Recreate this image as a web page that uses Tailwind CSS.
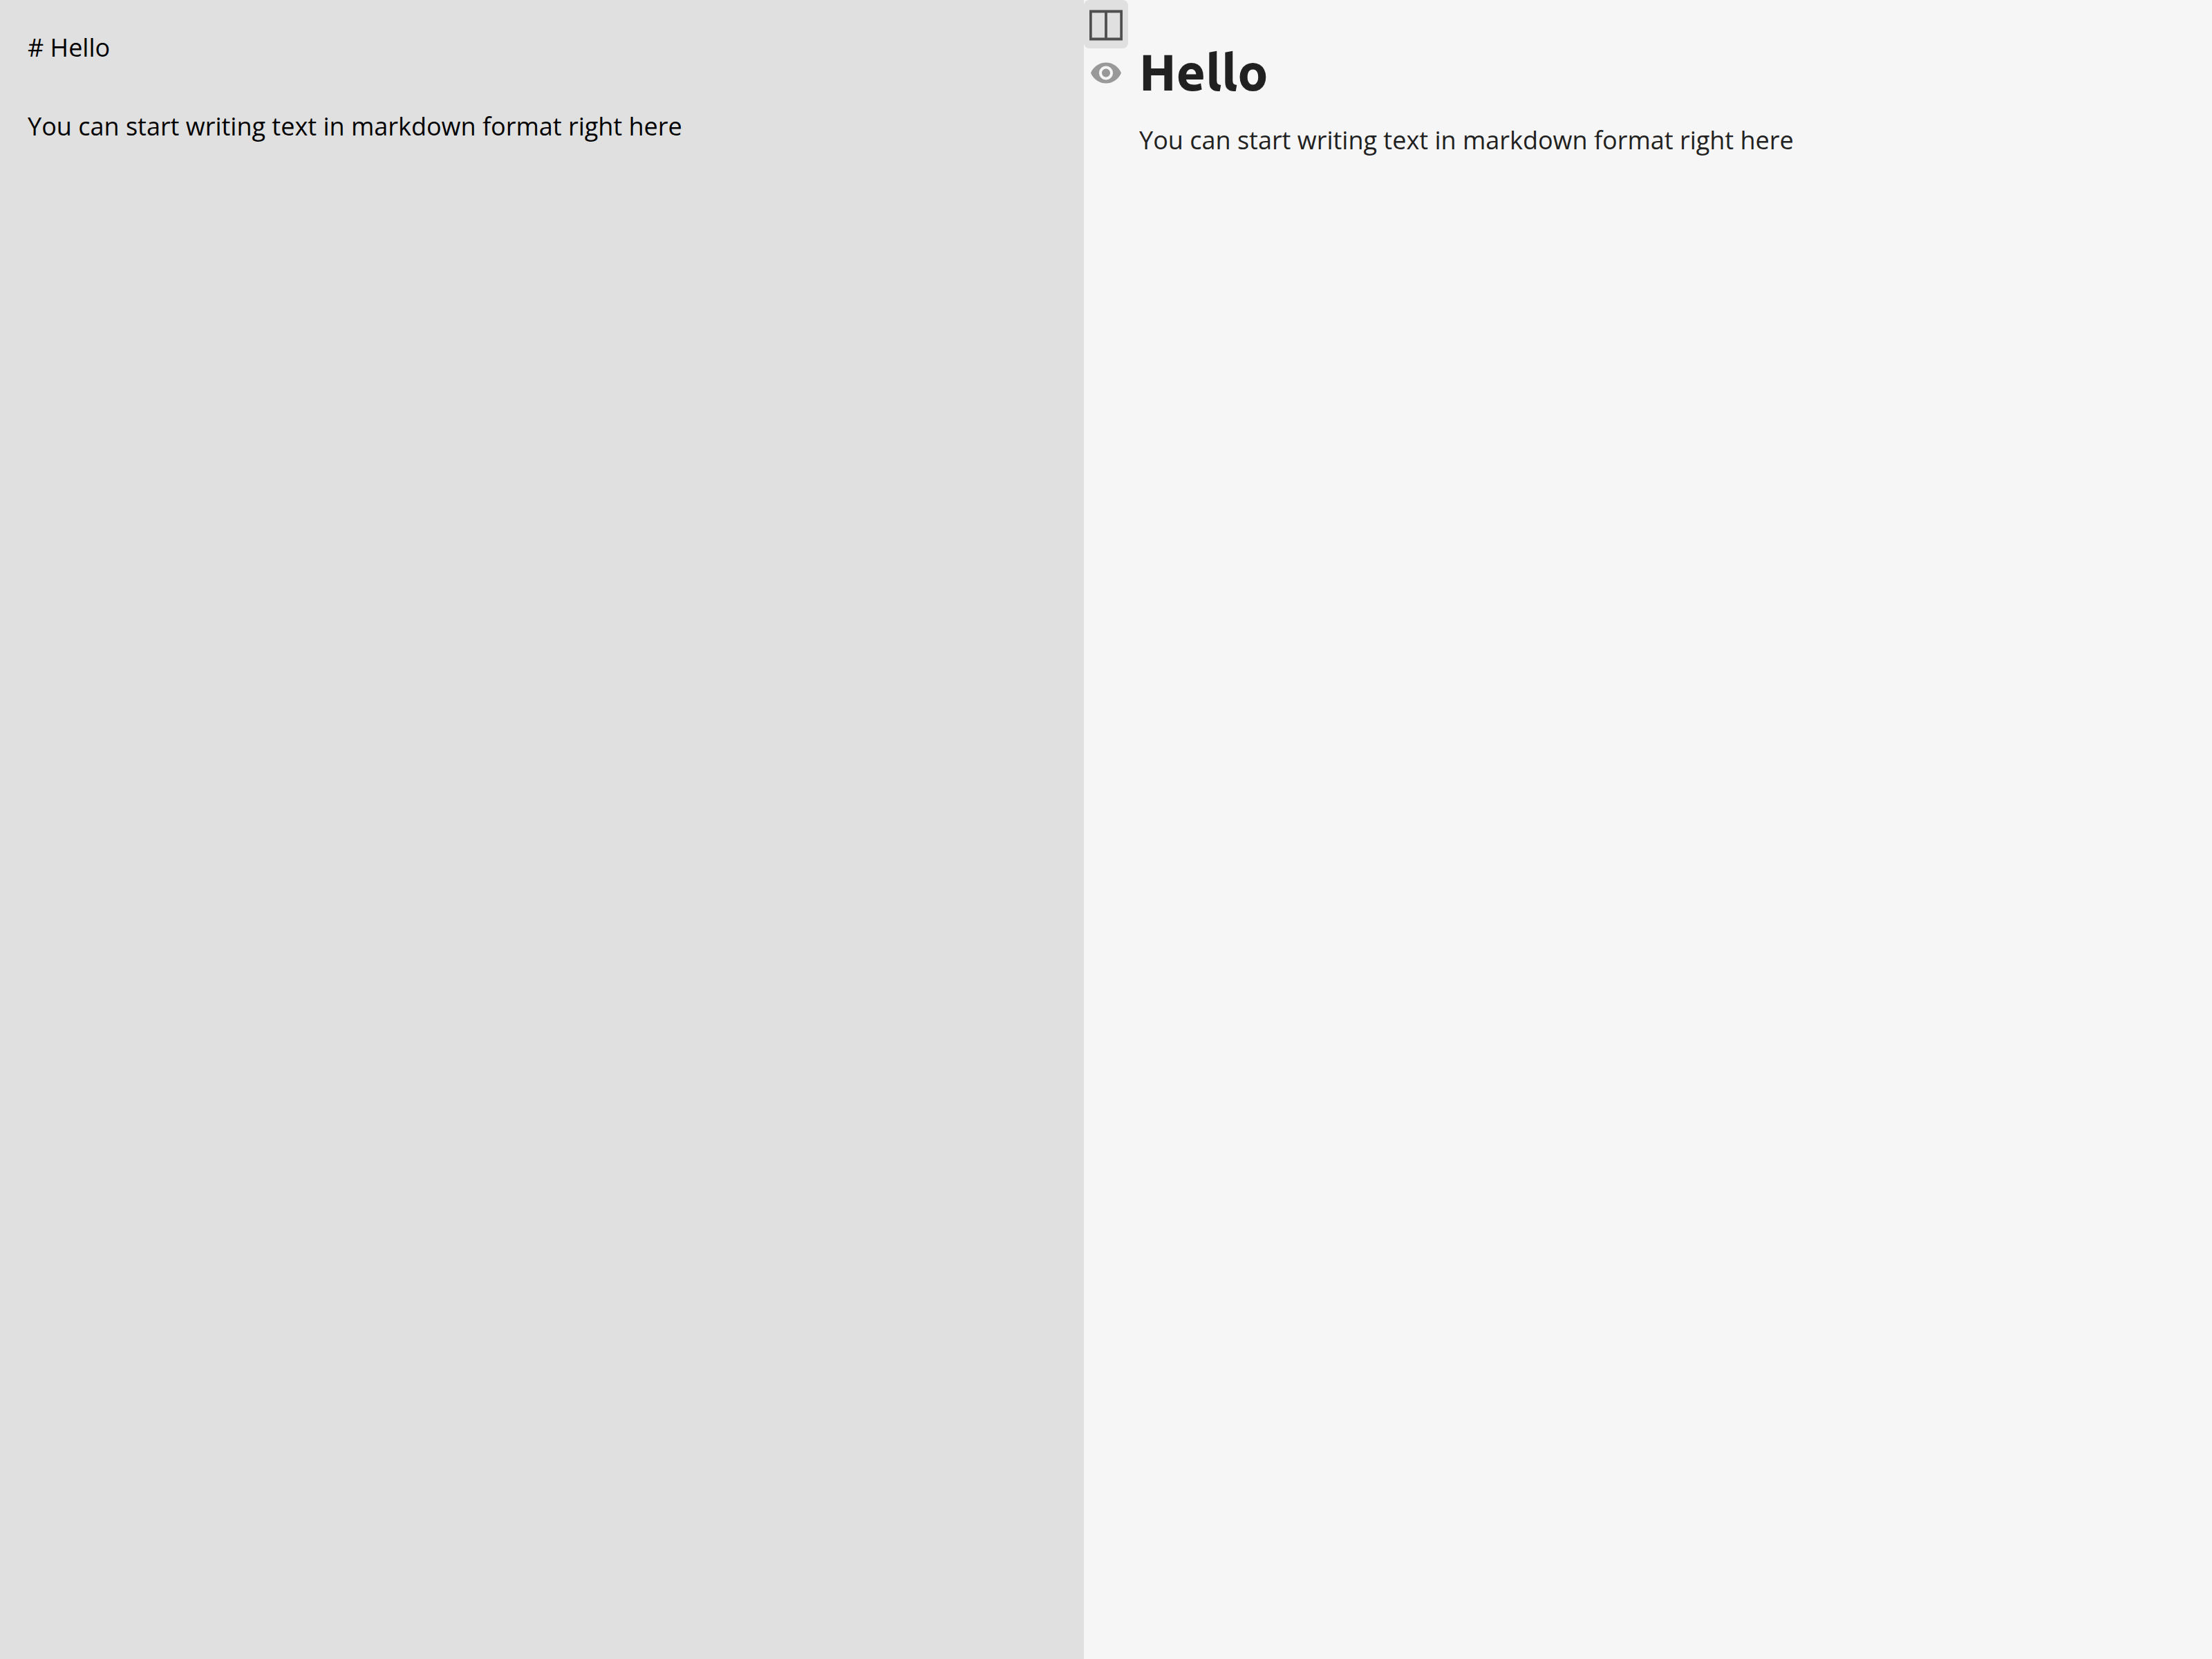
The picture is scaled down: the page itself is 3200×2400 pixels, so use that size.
<!DOCTYPE html>
<html lang="en">
<head>
<meta charset="utf-8">
<meta name="viewport" content="width=device-width, initial-scale=1">
<title>Markdown editor</title>
<script src="https://cdn.jsdelivr.net/npm/@tailwindcss/browser@4"></script>
</head>
<body class="bg-[#f6f6f6]">
<main class="flex h-screen font-['Open_Sans',sans-serif] text-[36px] leading-[57px] text-[#212121]">
  <textarea aria-label="Markdown source" spellcheck="false" class="block h-full w-[49%] resize-none bg-[#e0e0e0] p-10 text-black outline-none"># Hello

You can start writing text in markdown format right here</textarea>
  <nav aria-label="View mode" class="flex w-[2%] flex-col">
    <button type="button" aria-label="Split view" aria-pressed="true" class="flex h-[70px] items-center justify-center rounded-lg bg-[#e0e0e0] text-[#4f4f4f]">
      <svg class="size-12" viewBox="0 0 48 48" fill="currentColor" fill-rule="evenodd" aria-hidden="true"><path d="M0 3.5h48v44H0zM3.7 7.500v36h18.400v-36zM25.900 7.500v36h18.400v-36z"/></svg>
    </button>
    <button type="button" aria-label="Preview" aria-pressed="false" class="flex h-[70px] items-center justify-center rounded-lg text-[#999999]">
      <svg class="size-12" viewBox="0 -0.25 24 24" fill="currentColor" aria-hidden="true"><path d="M12 4.500C7 4.500 2.730 7.610 1 12c1.730 4.390 6 7.500 11 7.500s9.270-3.110 11-7.500c-1.730-4.390-6-7.500-11-7.500zM12 17c-2.760 0-5-2.240-5-5s2.240-5 5-5 5 2.240 5 5-2.240 5-5 5zm0-8c-1.660 0-3 1.340-3 3s1.340 3 3 3 3-1.340 3-3-1.340-3-3-3z"/></svg>
    </button>
  </nav>
  <article class="min-w-0 flex-1 overflow-auto px-4 pt-16">
    <h1 class="font-['Ubuntu','Ubuntu_Sans','Noto_Sans_CJK_SC',sans-serif] text-[73px] leading-[80px] font-extrabold">Hello</h1>
    <p class="mt-[30px]">You can start writing text in markdown format right here</p>
  </article>
</main>
</body>
</html>
